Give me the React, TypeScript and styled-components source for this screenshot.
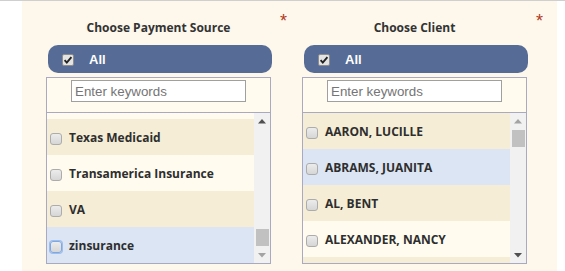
import React, { useEffect, useRef } from "react";
import styled, { createGlobalStyle } from "styled-components";

const GlobalStyle = createGlobalStyle`
  html, body {
    margin: 0;
    padding: 0;
    background: #ffffff;
  }
  * {
    box-sizing: border-box;
  }
`;

type Row = { label: string; tone: "beige" | "cream" | "blue"; focused?: boolean };

const paymentSources: Row[] = [
  { label: "Superior HealthPlan", tone: "cream" },
  { label: "Texas Medicaid", tone: "beige" },
  { label: "Transamerica Insurance", tone: "cream" },
  { label: "VA", tone: "beige" },
  { label: "zinsurance", tone: "blue", focused: true },
];

const clients: Row[] = [
  { label: "AARON, LUCILLE", tone: "beige" },
  { label: "ABRAMS, JUANITA", tone: "blue" },
  { label: "AL, BENT", tone: "beige" },
  { label: "ALEXANDER, NANCY", tone: "cream" },
  { label: "", tone: "beige" },
];

function CheckedBox() {
  return (
    <svg width="12" height="12" viewBox="0 0 12 12">
      <rect x="0.5" y="0.5" width="11" height="11" rx="1.5" fill="#e4e4e4" stroke="#8d8d8d" />
      <path d="M2.6 6.2 L4.8 8.6 L9.4 3.2" fill="none" stroke="#222" strokeWidth="1.9" />
    </svg>
  );
}

function Arrow({ down, active }: { down?: boolean; active?: boolean }) {
  return (
    <svg width="8" height="5" viewBox="0 0 8 5">
      <path
        d={down ? "M0 0 L8 0 L4 4.5 Z" : "M0 4.5 L8 4.5 L4 0 Z"}
        fill={active ? "#505050" : "#a3a3a3"}
      />
    </svg>
  );
}

function PickList({
  title,
  rows,
  scrollTo,
  thumbAtEnd,
}: {
  title: string;
  rows: Row[];
  scrollTo: number;
  thumbAtEnd: boolean;
}) {
  const listRef = useRef<HTMLDivElement>(null);

  // the list is shown scrolled part way, like the real picker
  useEffect(() => {
    if (listRef.current) listRef.current.scrollTop = scrollTo;
  }, [scrollTo]);

  return (
    <StyledColumn>
      <StyledStar>*</StyledStar>
      <StyledTitle>{title}</StyledTitle>
      <StyledHeaderBar>
        <CheckedBox />
        <StyledAllLabel>All</StyledAllLabel>
      </StyledHeaderBar>
      <StyledListBox>
        <StyledSearchArea>
          <StyledSearchInput placeholder="Enter keywords" />
        </StyledSearchArea>
        <StyledViewport>
          <StyledRows ref={listRef}>
            {rows.map((row, i) => (
              <StyledRow key={i} $tone={row.tone}>
                <StyledBox $focused={row.focused} />
                {row.label && <StyledRowLabel>{row.label}</StyledRowLabel>}
              </StyledRow>
            ))}
          </StyledRows>
          <StyledScrollTrack>
            <StyledArrowButton>
              <Arrow active={thumbAtEnd} />
            </StyledArrowButton>
            <StyledThumbArea $atEnd={thumbAtEnd}>
              <StyledThumb />
            </StyledThumbArea>
            <StyledArrowButton>
              <Arrow down active={!thumbAtEnd} />
            </StyledArrowButton>
          </StyledScrollTrack>
        </StyledViewport>
      </StyledListBox>
    </StyledColumn>
  );
}

export default function App() {
  return (
    <>
      <GlobalStyle />
      <StyledPage>
        <StyledPanel>
          <PickList title="Choose Payment Source" rows={paymentSources} scrollTo={30} thumbAtEnd />
          <PickList title="Choose Client" rows={clients} scrollTo={0} thumbAtEnd={false} />
        </StyledPanel>
      </StyledPage>
    </>
  );
}

const StyledPage = styled.div`
  border-top: 1px solid #cfcfcf;
  height: 271px;
  overflow: hidden;
`;

const StyledPanel = styled.div`
  margin-left: 22px;
  width: 535px;
  height: 270px;
  background: #fdf7ec;
  padding: 19px 0 0 24px;
  display: grid;
  grid-template-columns: 256px 225px;
  align-content: start;
`;

const StyledColumn = styled.div`
  position: relative;
  width: 225px;
  display: flex;
  flex-direction: column;
`;

const StyledStar = styled.span`
  position: absolute;
  left: 234px;
  top: -8px;
  font-family: "Liberation Sans", Arial, sans-serif;
  font-size: 18px;
  line-height: 18px;
  color: #b03a22;
`;

const StyledTitle = styled.div`
  font-family: "Open Sans", sans-serif;
  font-weight: 700;
  font-size: 12px;
  line-height: 16px;
  color: #333333;
  text-align: center;
  margin-bottom: 9px;
`;

const StyledHeaderBar = styled.div`
  margin-left: 2px;
  width: 224px;
  height: 28px;
  border-radius: 10px;
  background: #566b95;
  display: flex;
  align-items: center;
  gap: 15px;
  padding-left: 14px;
  padding-top: 1px;
  margin-bottom: 4px;
`;

const StyledAllLabel = styled.span`
  font-family: "Liberation Sans", Arial, sans-serif;
  font-weight: 700;
  font-size: 13px;
  color: #ffffff;
`;

const StyledListBox = styled.div`
  width: 225px;
  height: 187px;
  border: 1px solid #a9a9bf;
  background: #fffcef;
  display: flex;
  flex-direction: column;
`;

const StyledSearchArea = styled.div`
  height: 35px;
  border-bottom: 1px solid #a9a9bf;
  display: flex;
  justify-content: center;
  padding-top: 2px;
`;

const StyledSearchInput = styled.input`
  width: 175px;
  height: 22px;
  border: 1px solid #a0a0a0;
  background: #ffffff;
  padding: 0 3px;
  font-family: "Liberation Sans", Arial, sans-serif;
  font-size: 13.33px;
  line-height: 18px;
  outline: none;
  &::placeholder {
    color: #757575;
  }
`;

const StyledViewport = styled.div`
  flex: 1;
  display: flex;
  min-height: 0;
`;

const StyledRows = styled.div`
  flex: 1;
  overflow: hidden;
`;

const toneColors = {
  beige: "#f5edd6",
  cream: "#fffcef",
  blue: "#dce5f3",
};

const StyledRow = styled.div<{ $tone: Row["tone"] }>`
  height: 36px;
  background: ${({ $tone }) => toneColors[$tone]};
  display: flex;
  align-items: center;
  gap: 7px;
  padding-left: 3px;
`;

const StyledBox = styled.span<{ $focused?: boolean }>`
  width: 12px;
  height: 12px;
  margin-top: 3px;
  flex-shrink: 0;
  border-radius: 3px;
  border: 1px solid ${({ $focused }) => ($focused ? "#7fa8e3" : "#acacac")};
  box-shadow: ${({ $focused }) => ($focused ? "0 0 0 1px #9dbdec" : "none")};
  background: linear-gradient(#ececec, #d6d6d6);
`;

const StyledRowLabel = styled.span`
  font-family: "Open Sans", sans-serif;
  font-weight: 700;
  font-size: 12px;
  color: #2e2e2e;
  white-space: nowrap;
`;

const StyledScrollTrack = styled.div`
  width: 16px;
  background: #f1f1f1;
  display: flex;
  flex-direction: column;
`;

const StyledArrowButton = styled.div`
  height: 16px;
  display: flex;
  align-items: center;
  justify-content: center;
`;

const StyledThumbArea = styled.div<{ $atEnd: boolean }>`
  flex: 1;
  display: flex;
  flex-direction: column;
  justify-content: ${({ $atEnd }) => ($atEnd ? "flex-end" : "flex-start")};
  padding: 1px 1px 1px 2px;
`;

const StyledThumb = styled.div`
  height: 17px;
  background: #c1c1c1;
`;
